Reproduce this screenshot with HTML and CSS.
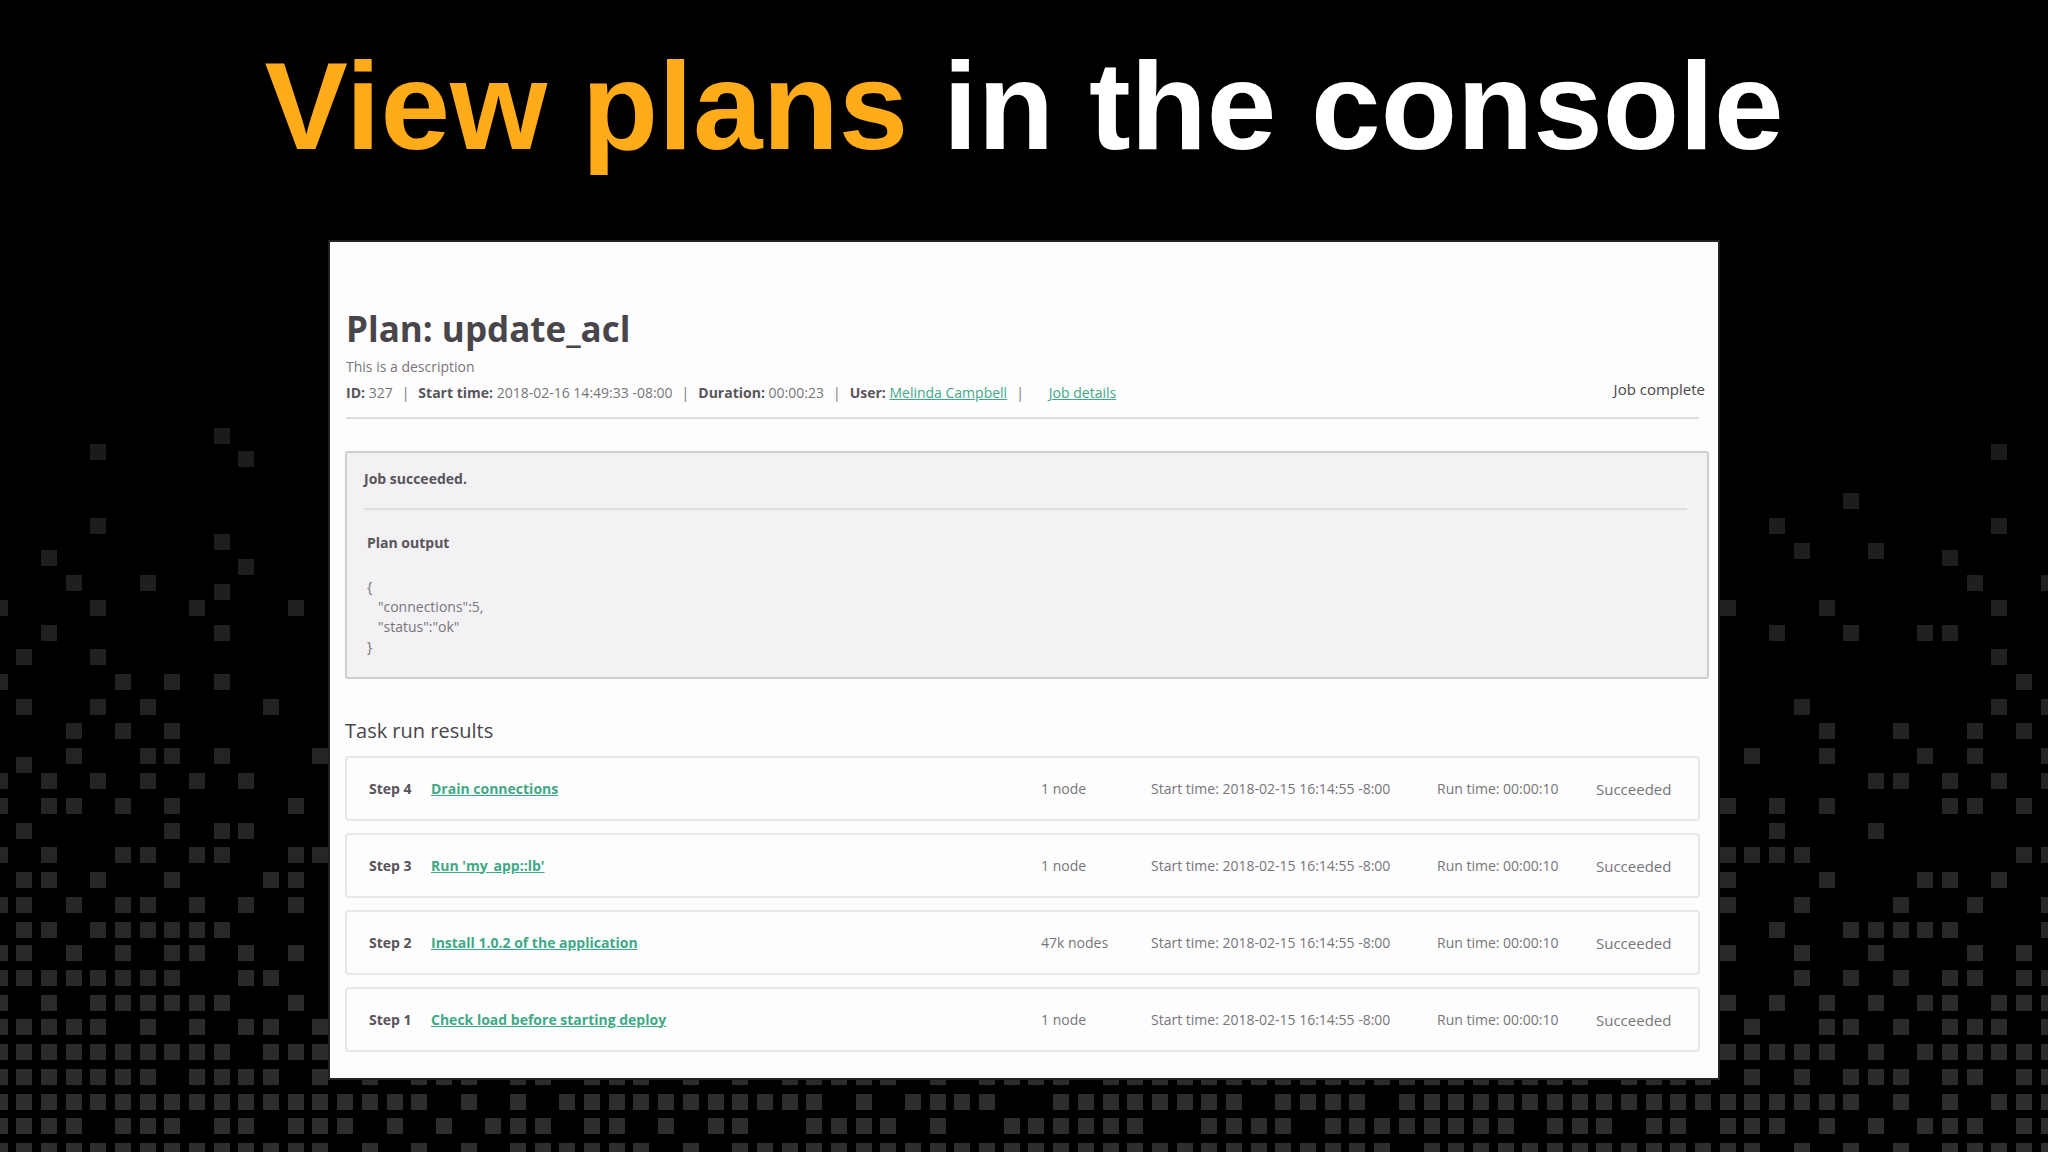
FILE: index.html
```html
<!DOCTYPE html>
<html lang="en">
<head>
    <meta charset="UTF-8">
    <meta name="viewport" content="width=device-width, initial-scale=1.0">
    <title>View plans in the console</title>
    <link rel="stylesheet" href="styles.css">
</head>
<body>
    <svg class="pixels" id="pixels" viewBox="0 0 2048 1152" preserveAspectRatio="xMidYMax slice" aria-hidden="true"></svg>

    <h1 class="slide-title"><span class="highlight">View plans</span> in the console</h1>

    <main class="console">
        <header class="plan-header">
            <div class="plan-info">
                <h2>Plan: update_acl</h2>
                <p class="description">This is a description</p>
                <p class="meta">
                    <span><b>ID:</b> 327</span>
                    <span class="bar">|</span>
                    <span><b>Start time:</b> 2018-02-16 14:49:33 -08:00</span>
                    <span class="bar">|</span>
                    <span><b>Duration:</b> 00:00:23</span>
                    <span class="bar">|</span>
                    <span><b>User:</b> <a href="#">Melinda Campbell</a></span>
                    <span class="bar">|</span>
                    <a class="details" href="#">Job details</a>
                </p>
            </div>
            <div class="job-status">Job complete</div>
        </header>

        <section class="output">
            <p class="result">Job succeeded.</p>
            <div class="output-body">
                <h3>Plan output</h3>
                <pre>{
   "connections":5,
   "status":"ok"
}</pre>
            </div>
        </section>

        <h3 class="tasks-title">Task run results</h3>
        <table class="tasks">
            <tbody>
                <tr>
                    <th scope="row">Step 4</th>
                    <td><a href="#">Drain connections</a></td>
                    <td class="nodes">1 node</td>
                    <td class="start">Start time: 2018-02-15 16:14:55 -8:00</td>
                    <td class="run">Run time: 00:00:10</td>
                    <td class="state">Succeeded</td>
                </tr>
                <tr>
                    <th scope="row">Step 3</th>
                    <td><a href="#">Run 'my_app::lb'</a></td>
                    <td class="nodes">1 node</td>
                    <td class="start">Start time: 2018-02-15 16:14:55 -8:00</td>
                    <td class="run">Run time: 00:00:10</td>
                    <td class="state">Succeeded</td>
                </tr>
                <tr>
                    <th scope="row">Step 2</th>
                    <td><a href="#">Install 1.0.2 of the application</a></td>
                    <td class="nodes">47k nodes</td>
                    <td class="start">Start time: 2018-02-15 16:14:55 -8:00</td>
                    <td class="run">Run time: 00:00:10</td>
                    <td class="state">Succeeded</td>
                </tr>
                <tr>
                    <th scope="row">Step 1</th>
                    <td><a href="#">Check load before starting deploy</a></td>
                    <td class="nodes">1 node</td>
                    <td class="start">Start time: 2018-02-15 16:14:55 -8:00</td>
                    <td class="run">Run time: 00:00:10</td>
                    <td class="state">Succeeded</td>
                </tr>
            </tbody>
        </table>
    </main>

    <script src="pixels.js"></script>
</body>
</html>
```

FILE: styles.css
```css
* {
    margin: 0;
    padding: 0;
    box-sizing: border-box;
}

body {
    background: #000;
    min-height: 100vh;
    padding: 32px 0 70px;
    font-family: 'Open Sans', 'Noto Sans', sans-serif;
    font-size: 14px;
    line-height: 20px;
    color: #77757a;
}

.pixels {
    position: absolute;
    left: 0;
    top: 0;
    width: 100%;
    height: 100%;
    z-index: -1;
}

.slide-title {
    font-family: 'Liberation Sans', Arial, sans-serif;
    font-size: 125px;
    line-height: 148px;
    color: #fff;
    text-align: center;
    margin-bottom: 62px;
}

.highlight {
    color: #ffab1a;
}

.console {
    background: #fefdfe;
    margin: 0 330px;
    padding: 62px 9px 26px 15px;
    box-shadow: 0 0 0 2px #222023;
}

a {
    color: #3fa987;
    text-decoration: underline;
}

b, th {
    font-weight: bold;
    color: #57555a;
}

/* Header */
.plan-header {
    display: flex;
    justify-content: space-between;
    align-items: flex-end;
    border-bottom: 2px solid #dddbde;
    margin: 0 10px 32px 1px;
    padding-bottom: 14px;
}

.plan-info h2 {
    font-size: 35px;
    line-height: 50px;
    color: #48464a;
}

.description {
    margin-top: 3px;
    margin-bottom: 6px;
}

.meta {
    display: flex;
    gap: 9px;
}

.details {
    margin-left: 16px;
}

.job-status {
    font-size: 15px;
    line-height: 28px;
    color: #48464a;
    margin-right: -6px;
}

/* Output box */
.output {
    background: #f3f1f4;
    border: 2px solid #cfcdd0;
    border-radius: 3px;
    padding: 16px 20px 20px 17px;
    margin-bottom: 38px;
}

.result {
    font-weight: bold;
    color: #57555a;
    padding-bottom: 19px;
    border-bottom: 2px solid #dfdde0;
}

.output-body {
    padding: 23px 3px 0;
}

.output-body h3 {
    font-size: 14px;
    color: #57555a;
    margin-bottom: 24px;
}

.output-body pre {
    font-family: inherit;
}

/* Task list */
.tasks-title {
    font-size: 20px;
    font-weight: normal;
    line-height: 27px;
    color: #48464a;
}

.tasks {
    width: calc(100% - 9px);
    table-layout: fixed;
    border-collapse: separate;
    border-spacing: 0 12px;
    margin-bottom: -12px;
}

.tasks th,
.tasks td {
    height: 65px;
    text-align: left;
    border: solid #e9e7ea;
    border-width: 2px 0;
    white-space: nowrap;
}

.tasks th {
    width: 86px;
    padding-left: 22px;
    border-left-width: 2px;
    border-radius: 4px 0 0 4px;
}

.tasks td a {
    font-weight: bold;
}

.tasks .nodes {
    width: 110px;
}

.tasks .start {
    width: 286px;
}

.tasks .run {
    width: 159px;
}

.tasks .state {
    width: 104px;
    font-size: 15px;
    border-right-width: 2px;
    border-radius: 0 4px 4px 0;
}
```

FILE: pixels.js
```js
// Filled cells of the background, as [top, column, column or [from, to], ...]
const rows = [
    [428, 9],
    [444, 4, 81],
    [451, 10],
    [493, 75],
    [518, 4, 72, 81],
    [534, 9],
    [543, 73, 76],
    [550, 2, 79],
    [559, 10],
    [575, 3, 6, 80, 83],
    [584, 9],
    [600, 0, 4, 8, 12, 70, 74, 81],
    [625, 2, 9, 72, 75, 78, 79],
    [649, 1, 4, 81],
    [674, 0, 5, 7, 9, 82],
    [699, 1, 4, 6, 11, 73, 81, 83],
    [723, 3, 5, 7, 74, 77, 80, 82],
    [748, 3, 6, 7, 9, 13, 71, 74, 78, 80, 83],
    [757, 1],
    [773, 0, 2, 4, 6, 8, 10, 76, 77, 79, 81, 83],
    [798, 0, 2, 3, 5, 7, 12, 70, 72, 74, 79, 80, 82],
    [823, 1, 7, 9, 10, 72, 76],
    [847, 0, 2, 5, 6, 8, 9, 12, 13, [70, 73], 82, 83],
    [872, 1, 2, 4, 7, 11, 12, 70, 74, 78, 79, 81],
    [897, 0, 1, 3, 5, 6, 8, 10, 12, 70, 73, 77, 80, 83],
    [922, 1, 2, [4, 9], 72, [75, 79], 83],
    [945, 0, 1, 3, 5, 7, 8, 10, 12, 70, 73, 76, 80, 82],
    [970, [0, 7], 10, 11, 73, 75, 77, 79, 80, 82, 83],
    [995, 0, 2, [4, 9], 12, 70, 72, 74, 76, 78, 79, [81, 83]],
    [1019, [0, 4], 6, 8, 10, 11, 13, 71, 74, 75, 77, [79, 81], 83],
    [1044, [0, 9], [11, 13], [70, 74], 76, [78, 83]],
    [1069, [0, 6], [8, 11], 13, 15, [17, 19], 21, 22, [24, 26], 28, 30, [32, 36], 38, [40, 43], [45, 64], [66, 69], 71, 73, [75, 77], 79, 80, 82, 83],
    [1094, [0, 17], 19, 21, [23, 33], 35, [37, 40], [43, 50], [52, 55], [57, 75], 77, 79, [81, 83]],
    [1118, [0, 3], [5, 7], 9, 10, [12, 14], 16, 18, [20, 22], 24, 25, 27, 29, 30, [33, 36], 38, [41, 46], [49, 52], [54, 61], [63, 65], 67, 68, [70, 72], 74, 76, [78, 80], 82, 83],
    [1143, [0, 13], 15, 17, 19, [21, 26], 28, [30, 56], [58, 71], 73, 75, 77, [79, 83]]
];

const svg = document.getElementById('pixels');

function addCell(col, top) {
    const rect = document.createElementNS('http://www.w3.org/2000/svg', 'rect');
    // Cells get lighter towards the bottom
    const shade = Math.round(28 + (top - 428) / 715 * 19);
    rect.setAttribute('x', Math.round(col * 24.69 - 8.5));
    rect.setAttribute('y', top);
    rect.setAttribute('width', 16);
    rect.setAttribute('height', 16);
    rect.setAttribute('fill', `rgb(${shade}, ${shade - 1}, ${shade})`);
    svg.appendChild(rect);
}

rows.forEach(([top, ...cells]) => {
    cells.forEach(cell => {
        const [from, to] = Array.isArray(cell) ? cell : [cell, cell];
        for (let col = from; col <= to; col++) {
            addCell(col, top);
        }
    });
});
```
